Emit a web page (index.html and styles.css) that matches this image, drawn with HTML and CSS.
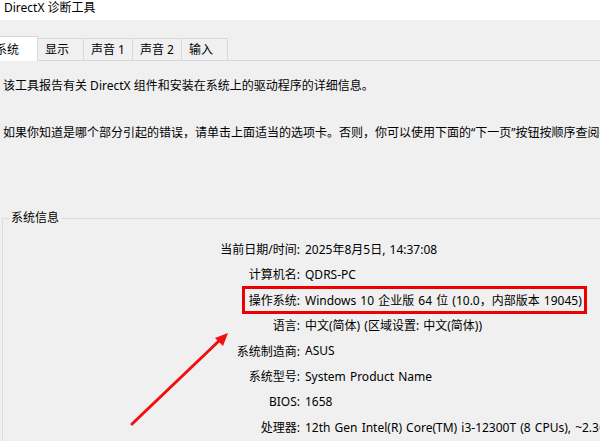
FILE: index.html
```html
<!DOCTYPE html>
<html lang="zh-CN">
<head>
    <meta charset="UTF-8">
    <title>DirectX 诊断工具</title>
    <link rel="stylesheet" href="styles.css">
</head>
<body>
    <div class="titlebar">DirectX 诊断工具</div>

    <div class="tabs">
        <div class="tab selected">系统</div>
        <div class="tab">显示</div>
        <div class="tab">声音 1</div>
        <div class="tab">声音 2</div>
        <div class="tab">输入</div>
    </div>

    <div class="page">
        <p class="intro">该工具报告有关 DirectX 组件和安装在系统上的驱动程序的详细信息。</p>
        <p class="intro second">如果你知道是哪个部分引起的错误，请单击上面适当的选项卡。否则，你可以使用下面的“下一页”按钮按顺序查阅每一页。</p>

        <fieldset class="group">
            <legend>系统信息</legend>
            <div class="info-grid">
                <span class="label">当前日期/时间:</span><span class="value">2025年8月5日, 14:37:08</span>
                <span class="label">计算机名:</span><span class="value">QDRS-PC</span>
                <span class="label">操作系统:</span><span class="value">Windows 10 企业版 64 位 (10.0，内部版本 19045)</span>
                <span class="label">语言:</span><span class="value">中文(简体) (区域设置: 中文(简体))</span>
                <span class="label">系统制造商:</span><span class="value">ASUS</span>
                <span class="label">系统型号:</span><span class="value">System Product Name</span>
                <span class="label">BIOS:</span><span class="value">1658</span>
                <span class="label">处理器:</span><span class="value">12th Gen Intel(R) Core(TM) i3-12300T (8 CPUs), ~2.3GHz</span>
            </div>
        </fieldset>
    </div>

    <!-- annotation overlay -->
    <div class="highlight"></div>
    <svg class="arrow" width="600" height="441" viewBox="0 0 600 441">
        <line x1="132" y1="424" x2="221" y2="339" stroke="#f01010" stroke-width="3" stroke-linecap="round"/>
        <polygon points="228,333 215,338 223,346" fill="#f01010"/>
    </svg>
</body>
</html>
```

FILE: styles.css
```css
body {
    margin: 0;
    padding: 0;
    width: 600px;
    height: 441px;
    overflow: hidden;
    position: relative;
    background-color: #f0f0f0;
    color: #000;
    font-family: "Noto Sans", "Noto Sans CJK SC", sans-serif;
    font-size: 12px;
}

.titlebar {
    height: 20px;
    line-height: 15px;
    padding-left: 4px;
    background-color: #fff;
    white-space: nowrap;
}

/* Tab strip */
.tabs {
    display: flex;
    align-items: flex-end;
    height: 25px;
    margin-top: 16px;
    margin-left: -13px;
    border-bottom: 1px solid #d9d9d9;
    box-sizing: border-box;
}

.tab {
    height: 22px;
    line-height: 22px;
    min-width: 47px;
    padding: 0 7px;
    box-sizing: border-box;
    border: 1px solid #d9d9d9;
    border-bottom: none;
    margin-left: -1px;
    white-space: nowrap;
}

.tab.selected {
    height: 25px;
    line-height: 25px;
    min-width: 51px;
    margin-bottom: -1px;
    margin-left: 0;
    background-color: #fff;
    position: relative;
    z-index: 1;
}

/* Page content */
.page {
    padding-top: 15px;
}

.intro {
    margin: 0;
    padding-left: 3px;
    line-height: 20px;
    white-space: nowrap;
}

.intro.second {
    margin-top: 27px;
}

.group {
    margin: 67px -40px 0 2px;
    padding: 10px 6px 20px 6px;
    border: 1px solid #dcdcdc;
}

.group legend {
    padding: 0 2px;
    line-height: 16px;
}

.info-grid {
    display: grid;
    grid-template-columns: 291px 1fr;
    grid-auto-rows: 25.5px;
    column-gap: 5px;
    align-items: center;
    white-space: nowrap;
}

.label {
    text-align: right;
}

.value {
    overflow: hidden;
    word-spacing: 1px;
}

/* Annotations */
.highlight {
    position: absolute;
    left: 242px;
    top: 286px;
    width: 345px;
    height: 28px;
    border: 3px solid #ee0000;
    box-sizing: border-box;
}

.arrow {
    position: absolute;
    left: 0;
    top: 0;
}
```
